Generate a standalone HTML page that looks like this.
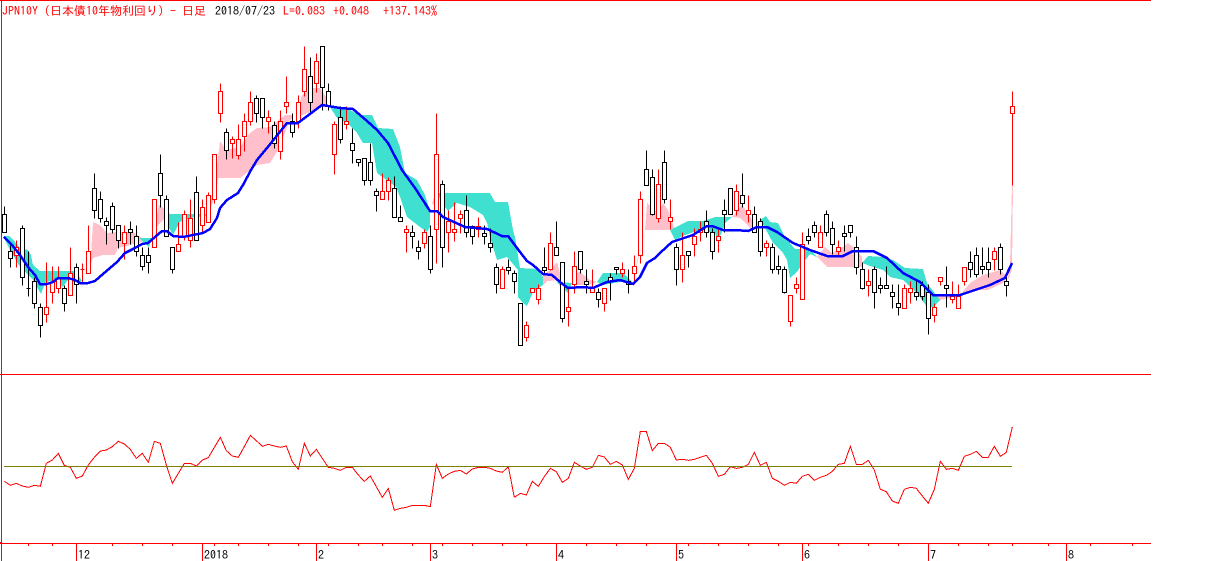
<!DOCTYPE html>
<html><head><meta charset="utf-8"><style>
html,body{margin:0;padding:0;background:#fff;width:1231px;height:561px;overflow:hidden}
svg{display:block}
text{font-family:"IPAGothic","Liberation Mono","Noto Sans CJK JP",monospace;font-size:12px;fill:#f00;text-rendering:optimizeSpeed}
</style></head><body>
<svg width="1231" height="561" viewBox="0 0 1231 561" xmlns="http://www.w3.org/2000/svg" shape-rendering="crispEdges">
<g fill="#ffc0cb">
<polygon points="83,281 90,270 93,222 100,225 107,233 117,232 133,232 142,238 142,242 118,248 115,255 103,255 93,258 88,273"/>
<polygon points="152,238 157,215 159,205 170,213 158,225"/>
<polygon points="208,214 214,185 218,158 220,141 226,150 240,147 250,133 257,128 270,127 285,115 292,115 293,118 290,120 278,150 270,163 257,165 240,178 218,178 216,195"/>
<polygon points="296,115 302,95 313,88 320,88 328,100 333,107 318,107 308,113 302,115"/>
<polygon points="432,203 436,192 440,193 438,210"/>
<polygon points="543,275 550,270 557,262 562,280 547,281 543,285"/>
<polygon points="572,274 580,272 590,280 597,282 588,285 575,285"/>
<polygon points="633,282 638,257 645,230 647,203 658,213 663,203 668,210 675,230 645,230"/>
<polygon points="732,217 742,205 748,213 753,222 760,222 762,228 750,228 740,218"/>
<polygon points="817,257 825,247 832,253 843,247 848,243 857,250 862,257 862,267 827,267"/>
<polygon points="933,295 960,295 970,283 983,275 1000,270 1007,277 1003,283 988,290 970,290 962,296 940,300"/>
<polygon points="1007,282 1010,265 1012,185 1013,185 1012,270"/>
</g>
<g fill="#40e0d0">
<polygon points="4,236 9,236 15,242 20,248 28,250 31,255 33,265 40,271 76,271 82,281 76,283 68,280 63,287 58,283 50,281 45,283 41,294 33,280 20,267 10,250 4,238"/>
<polygon points="139,238 152,238 149,247 143,242"/>
<polygon points="160,214 210,214 205,216 190,218 180,222 173,235 168,226 165,214"/>
<polygon points="330,107 350,110 360,115 372,115 378,128 393,129 400,147 405,173 417,180 425,195 430,210 430,227 427,232 420,227 407,217 400,197 396,187 377,173 372,143 363,143 357,133 347,123 337,118"/>
<polygon points="438,193 490,193 495,202 508,202 513,230 515,237 520,268 538,269 543,277 543,285 533,292 527,306 523,303 518,297 518,270 507,257 497,260 490,237 487,223 483,215 470,207 457,203 448,211 442,203"/>
<polygon points="557,282 572,283 568,293 562,288"/>
<polygon points="597,282 603,273 623,273 633,283 620,282 603,285"/>
<polygon points="670,230 688,221 703,221 715,217 732,217 725,223 723,230 718,240 715,233 700,230 685,235 675,240"/>
<polygon points="760,220 766,216 770,222 778,223 785,237 795,249 810,249 817,257 810,254 803,263 797,272 790,278 787,260 783,253 773,243 765,228"/>
<polygon points="862,263 868,256 883,257 893,260 905,268 923,269 927,283 940,300 933,307 927,307 917,293 903,280 890,277 883,270 873,267"/>
</g>
<g transform="translate(.5 .5)" stroke-width="1">
<path stroke="#000" fill="none" d="M4 206V232M10 245V267M22 225V285M28 251V296M34 277V308M40 303V337M64 285V311M76 263V303M94 173V218M100 191V222M106 217V244M112 202V233M118 225V248M130 221V244M136 225V256M142 247V270M148 247V273M160 154V207M166 195V236M172 247V273M196 176V240M226 128V159M256 95V122M262 98V128M274 121V148M292 113V137M310 57V113M322 46V110M328 83V110M340 106V143M352 128V163M358 159V166M364 158V185M370 143V185M376 188V211M394 176V217M400 205V221M412 225V248M418 240V259M430 225V273M442 180V267M466 195V237M472 225V244M484 225V244M490 228V252M496 263V293M508 259V274M514 270V293M520 303V345M544 247V273M556 221V255M562 262V322M580 251V273M586 269V293M598 288V307M610 273V300M616 267V274M628 269V293M646 150V185M652 169V215M664 150V203M676 243V285M688 251V267M706 210V237M712 228V259M724 199V232M730 188V214M742 173V207M754 206V232M760 218V256M772 243V273M778 255V274M784 266V293M808 228V244M814 221V237M826 210V236M832 221V254M844 225V251M850 225V237M856 236V274M862 262V289M874 266V308M880 277V293M886 266V288M892 284V308M898 284V315M916 281V300M922 281V300M928 284V334M946 266V307M970 251V277M976 247V277M982 247V274M988 247V277M1000 243V274M1006 274V296"/>
<path stroke="#f00" fill="none" d="M16 240V267M46 262V322M52 266V303M58 266V293M70 247V295M82 263V283M88 225V273M124 225V259M154 199V247M178 222V251M184 210V240M190 199V247M202 199V233M208 192V222M214 154V203M220 83V122M232 136V158M238 124V159M244 113V151M250 91V125M268 110V133M280 110V159M286 76V113M298 95V128M304 46V96M316 53V92M334 121V174M346 106V129M382 173V199M388 177V200M406 225V252M424 229V248M436 113V263M448 210V252M454 202V241M460 210V233M478 217V237M502 266V288M526 321V341M532 288V292M538 284V304M550 232V270M568 288V326M574 251V293M592 269V292M604 288V311M622 262V277M634 255V284M640 191V263M658 169V222M670 199V229M682 232V282M694 228V256M700 221V241M718 229V252M736 184V215M748 195V222M766 240V256M790 295V326M796 277V293M802 232V299M820 225V247M838 240V255M868 269V296M904 284V308M910 281V303M934 303V322M940 277V285M952 281V303M958 284V308M964 267V285M994 247V270M1012 91V185"/>
<path stroke="#000" fill="#fff" d="M2 214h4v18h-4zM8 251h4v7h-4zM20 228h4v49h-4zM26 288h4v0h-4zM32 281h4v22h-4zM38 307h4v18h-4zM62 288h4v15h-4zM74 267h4v17h-4zM92 188h4v22h-4zM98 199h4v19h-4zM104 221h4v4h-4zM110 206h4v23h-4zM116 225h4v15h-4zM128 229h4v3h-4zM134 236h4v15h-4zM140 255h4v11h-4zM146 255h4v7h-4zM158 173h4v22h-4zM164 199h4v37h-4zM170 247h4v22h-4zM194 192h4v48h-4zM224 132h4v18h-4zM254 98h4v15h-4zM260 98h4v19h-4zM272 125h4v18h-4zM290 121h4v11h-4zM308 76h4v26h-4zM320 46h4v41h-4zM326 91h4v15h-4zM338 117h4v22h-4zM350 143h4v7h-4zM356 159h4v3h-4zM362 158h4v22h-4zM368 162h4v18h-4zM374 191h4v4h-4zM392 188h4v29h-4zM398 217h4v4h-4zM410 232h4v4h-4zM416 247h4v4h-4zM428 236h4v33h-4zM440 184h4v63h-4zM464 210h4v22h-4zM470 226h4v10h-4zM482 233h4v3h-4zM488 243h4v4h-4zM494 267h4v17h-4zM506 267h4v3h-4zM512 273h4v8h-4zM518 303h4v42h-4zM542 267h4v3h-4zM554 247h4v8h-4zM560 262h4v56h-4zM578 251h4v18h-4zM584 281h4v3h-4zM596 292h4v7h-4zM608 277h4v4h-4zM614 267h4v2h-4zM626 281h4v3h-4zM644 169h4v16h-4zM650 177h4v37h-4zM662 162h4v37h-4zM674 247h4v22h-4zM686 251h4v4h-4zM704 221h4v11h-4zM710 232h4v19h-4zM722 210h4v4h-4zM728 188h4v26h-4zM740 195h4v8h-4zM752 214h4v18h-4zM758 221h4v30h-4zM770 247h4v22h-4zM776 266h4v3h-4zM782 269h4v23h-4zM806 236h4v4h-4zM812 225h4v7h-4zM824 214h4v18h-4zM830 228h4v16h-4zM842 233h4v3h-4zM848 225h4v7h-4zM854 247h4v20h-4zM860 269h4v19h-4zM872 269h4v23h-4zM878 285h4v3h-4zM884 285h4v3h-4zM890 292h4v4h-4zM896 303h4v4h-4zM914 292h4v4h-4zM920 285h4v11h-4zM926 292h4v26h-4zM944 285h4v3h-4zM968 262h4v7h-4zM974 255h4v19h-4zM980 266h4v3h-4zM986 262h4v7h-4zM998 247h4v22h-4zM1004 281h4v4h-4z"/>
<path stroke="#f00" fill="#fff" d="M14 247h4v8h-4zM44 307h4v7h-4zM50 282h4v10h-4zM56 278h4v10h-4zM68 273h4v22h-4zM80 269h4v0h-4zM86 251h4v22h-4zM122 232h4v11h-4zM152 199h4v48h-4zM176 244h4v7h-4zM182 214h4v22h-4zM188 218h4v22h-4zM200 207h4v18h-4zM206 195h4v27h-4zM212 154h4v45h-4zM218 91h4v22h-4zM230 139h4v4h-4zM236 139h4v16h-4zM242 121h4v15h-4zM248 102h4v19h-4zM266 117h4v4h-4zM278 121h4v30h-4zM284 102h4v4h-4zM296 102h4v19h-4zM302 69h4v22h-4zM314 61h4v22h-4zM332 124h4v30h-4zM344 121h4v3h-4zM380 191h4v8h-4zM386 180h4v11h-4zM404 229h4v3h-4zM422 232h4v11h-4zM434 154h4v75h-4zM446 221h4v11h-4zM452 229h4v3h-4zM458 214h4v4h-4zM476 226h4v3h-4zM500 269h4v19h-4zM524 325h4v12h-4zM530 288h4v4h-4zM536 288h4v11h-4zM548 243h4v26h-4zM566 307h4v4h-4zM572 266h4v18h-4zM590 288h4v4h-4zM602 288h4v15h-4zM620 269h4v4h-4zM632 266h4v7h-4zM638 199h4v56h-4zM656 184h4v34h-4zM668 217h4v4h-4zM680 255h4v14h-4zM692 236h4v8h-4zM698 229h4v3h-4zM716 236h4v4h-4zM734 191h4v19h-4zM746 210h4v4h-4zM764 243h4v4h-4zM788 295h4v26h-4zM794 284h4v4h-4zM800 244h4v55h-4zM818 232h4v15h-4zM836 247h4v4h-4zM866 281h4v4h-4zM902 288h4v20h-4zM908 288h4v4h-4zM932 307h4v8h-4zM938 277h4v4h-4zM950 296h4v3h-4zM956 296h4v12h-4zM962 267h4v14h-4zM992 251h4v8h-4zM1010 106h4v7h-4z"/>
</g>
<polyline fill="none" stroke="#00f" stroke-width="2.5" points="4,237 12,245 20,255 28,267 35,275 40,284 47,284 53,282 58,278 68,278 75,280 80,283 88,283 95,281 103,274 110,268 117,262 125,253 133,249 142,244 148,243 155,237 162,231 167,231 173,236 183,237 193,235 203,233 210,229 217,218 220,208 227,200 238,193 243,185 251,170 257,160 267,148 287,123 298,123 310,114 322,105 328,106 340,108 353,109 367,121 377,130 388,143 402,170 415,188 430,211 437,211 443,217 465,227 487,229 502,236 508,236 520,252 527,261 533,265 543,274 552,275 560,282 568,288 583,287 593,288 607,282 620,280 633,284 640,277 647,263 655,258 660,253 672,242 693,235 707,226 712,226 723,230 735,230 748,231 757,227 767,227 777,232 793,243 810,250 827,256 843,256 853,251 873,251 887,258 903,273 920,282 933,295 960,295 990,285 1005,278 1012,263"/>
<g transform="translate(0 420) scale(.33333)" fill="none" stroke="#f00" stroke-width="3">
<polyline points="13,184 31,196 49,190 67,198 85,202 103,196 121,199 139,130 157,120 175,100 193,136 211,142 229,175 247,168 265,135 283,112 301,93 319,90 337,80 355,64 373,72 391,88 409,115 427,100 445,127 463,64 481,70 499,135 517,190 535,160 553,130 571,130 589,138 607,120 625,113 643,82 661,52 679,92 697,108 715,112 733,80 751,46 769,62 787,79 805,73 823,78 841,82 859,78 877,125 895,148 913,70 931,108 949,88 967,115 985,142 1003,145 1021,151 1039,142 1057,142 1075,165 1093,184 1111,168 1129,200 1147,232 1165,205 1183,271 1201,265 1219,262 1237,256 1255,256 1273,256 1291,260 1309,133 1327,175 1345,162 1363,154 1381,151 1399,162 1417,147 1435,142 1453,142 1471,145 1489,153 1507,157 1525,140 1543,232"/>
<polyline transform="translate(1530 0)" points="13,232 31,220 49,225 67,184 85,199 103,170 121,145 139,155 157,187 175,175 193,127 211,138 229,148 247,142 265,106 283,111 301,133 319,124 337,135 355,178 373,145 391,34 409,34 427,92 445,70 463,70 481,82 499,120 517,118 535,121 553,118 571,112 589,106 607,130 625,169 643,163 661,140 679,145 697,142 715,133 733,97 751,136 769,127 787,175 805,184 823,196 841,187 859,190 877,169 895,163 913,181 931,172 949,166 967,154 985,133 1003,130 1021,79 1039,133 1057,133 1075,121 1093,150 1111,208 1129,215 1147,243 1165,250 1183,208 1201,202 1219,205 1237,228 1255,250 1273,208 1291,124 1309,148 1327,145 1345,151 1363,109 1381,103 1399,94 1417,112 1435,112 1453,79 1471,109 1489,97 1507,21"/>
</g>
<path stroke="#808000" fill="none" d="M4 466.5H1012"/>
<path stroke="#f00" fill="none" d="M0 .5H1151M1.5 0V561M0 374.5H1151M0 543.5H1151M0 542.5H2M76.5 543V561M202.5 543V561M316.5 543V561M430.5 543V561M556.5 543V561M676.5 543V561M802.5 543V561M928.5 543V561M1066.5 543V561M28.5 543V546M52.5 543V546M112.5 543V546M142.5 543V546M172.5 543V546M214.5 543V546M238.5 543V546M268.5 543V546M298.5 543V546M328.5 543V546M358.5 543V546M382.5 543V546M412.5 543V546M442.5 543V546M472.5 543V546M502.5 543V546M526.5 543V546M586.5 543V546M616.5 543V546M646.5 543V546M688.5 543V546M718.5 543V546M748.5 543V546M778.5 543V546M808.5 543V546M838.5 543V546M868.5 543V546M898.5 543V546M958.5 543V546M988.5 543V546M1012.5 543V546M1048.5 543V546M1090.5 543V546M1132.5 543V546"/>
<text x="2" y="15">JPN10Y（日本債10年物利回り）-</text>
<text x="182" y="15">日足</text>
<text x="215" y="15" style="fill:#000">2018/07/23</text>
<text x="283" y="15">L=0.083</text>
<text x="333" y="15">+0.048</text>
<text x="383" y="15">+137.143%</text>
<g style="fill:#000">
<text x="78" y="559" style="fill:#000">12</text>
<text x="204" y="559" style="fill:#000">2018</text>
<text x="318" y="559" style="fill:#000">2</text>
<text x="432" y="559" style="fill:#000">3</text>
<text x="558" y="559" style="fill:#000">4</text>
<text x="678" y="559" style="fill:#000">5</text>
<text x="804" y="559" style="fill:#000">6</text>
<text x="930" y="559" style="fill:#000">7</text>
<text x="1068" y="559" style="fill:#000">8</text>
</g>
</svg>
</body></html>
